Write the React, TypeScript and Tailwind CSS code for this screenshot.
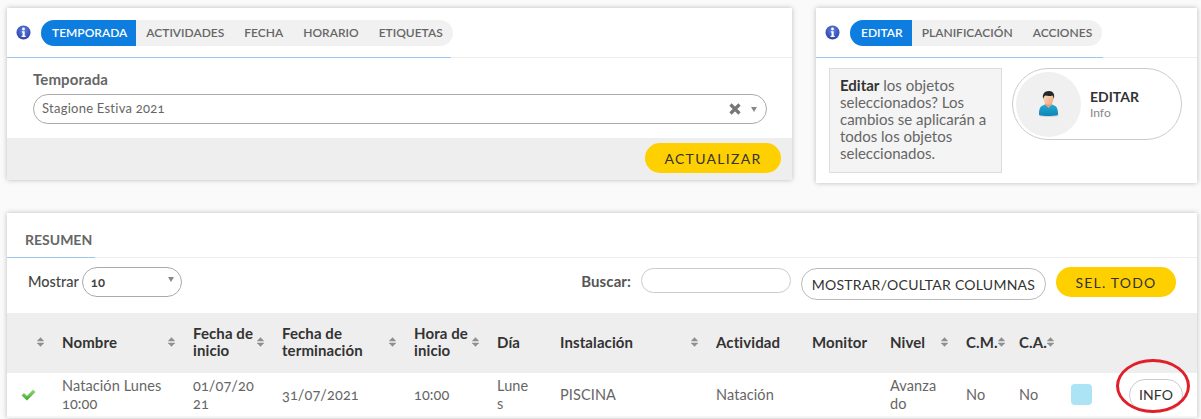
import React from "react";

function InfoIcon() {
  return (
    <svg width="15" height="15" viewBox="0 0 15 15" className="shrink-0">
      <defs>
        <radialGradient id="ig" cx="50%" cy="35%" r="70%">
          <stop offset="0%" stopColor="#5f7fe0" />
          <stop offset="100%" stopColor="#2a3fa8" />
        </radialGradient>
      </defs>
      <circle cx="7.5" cy="7.5" r="7" fill="url(#ig)" />
      <circle cx="7.5" cy="4" r="1.4" fill="#fff" />
      <path d="M5.8 6.2h2.9v4.6h1v1.2H5.6v-1.2h1V7.4h-.8z" fill="#fff" />
    </svg>
  );
}

function Sort() {
  return (
    <svg width="7" height="10" viewBox="0 0 7 10" className="shrink-0">
      <path d="M3.500 0.300L6.800 3.800Q7 4.300 6.400 4.300H0.600Q0 4.300 0.200 3.800z" fill="#8f8f8f" />
      <path d="M3.500 9.700L0.200 6.200Q0 5.700 0.600 5.700H6.400Q7 5.700 6.800 6.200z" fill="#8f8f8f" />
    </svg>
  );
}

function Caret({ className = "" }: { className?: string }) {
  return (
    <svg width="6" height="6" viewBox="0 0 6 6" className={className}>
      <path d="M0 1h6L3 6z" fill="#888" />
    </svg>
  );
}

function Person() {
  return (
    <svg width="21" height="26" viewBox="0 0 21 26">
      <defs>
        <linearGradient id="skin" x1="0" y1="0" x2="1" y2="1">
          <stop offset="0%" stopColor="#fde0c8" />
          <stop offset="100%" stopColor="#eda67c" />
        </linearGradient>
        <linearGradient id="shirt" x1="0" y1="0" x2="0" y2="1">
          <stop offset="0%" stopColor="#22a9d4" />
          <stop offset="100%" stopColor="#0f86b4" />
        </linearGradient>
      </defs>
      <ellipse cx="11" cy="24.800" rx="10" ry="1.100" fill="#d2d2d2" />
      <path d="M1 24c-.3-4.500.7-8 3-9.300L7 13.500l3.500 3 3.500-3 3 1.200c2.300 1.300 3.300 4.800 3 9.300-5.500 1.300-14.500 1.300-19 0z" fill="url(#shirt)" />
      <path d="M7 11.500h7v2.300L10.500 16.800 7 13.800z" fill="#e69b72" />
      <ellipse cx="10.500" cy="7.500" rx="5" ry="6.300" fill="url(#skin)" />
      <path d="M5.300 8C3.800 3.500 6.500 0 11 0c4 0 6.200 3 4.800 8-.3-1.700-.6-3-1.400-3.600-2 .7-4.500.7-7 .1C6.200 5 5.700 6.400 5.300 8z" fill="#262626" />
    </svg>
  );
}

function Tabs({ items }: { items: string[] }) {
  return (
    <div className="flex h-[26px] items-stretch rounded-[13px] bg-[#f1f1f1] text-[12px] font-semibold text-[#666]">
      {items.map((t, i) =>
        i === 0 ? (
          <div key={t} className="flex items-center rounded-l-[13px] bg-[#0d7ee0] pl-[11px] pr-[9px] text-white">
            {t}
          </div>
        ) : (
          <div key={t} className="flex items-center px-[10px]">
            {t}
          </div>
        )
      )}
    </div>
  );
}

const headers: { label: React.ReactNode; w: number; sort?: boolean }[] = [
  { label: "", w: 43, sort: true },
  { label: "Nombre", w: 131, sort: true },
  { label: <>Fecha de<br />inicio</>, w: 89, sort: true },
  { label: <>Fecha de<br />terminación</>, w: 132, sort: true },
  { label: <>Hora de<br />inicio</>, w: 83, sort: true },
  { label: "Día", w: 63 },
  { label: "Instalación", w: 156, sort: true },
  { label: "Actividad", w: 96 },
  { label: "Monitor", w: 78 },
  { label: "Nivel", w: 76, sort: true },
  { label: "C.M.", w: 53, sort: true },
  { label: "C.A.", w: 52, sort: true },
  { label: "", w: 54 },
  { label: "", w: 84 },
];

export default function App() {
  return (
    <div className="h-[419px] w-[1201px] overflow-hidden bg-[#fafafa] font-['Lato','Liberation_Sans',sans-serif] text-[14px] text-[#666] oldstyle-nums">
      <div className="flex items-start gap-[24px] pl-[7px] pr-[4px] pt-[8px]">
        {/* Temporada */}
        <section className="w-[785px] bg-white shadow-[0_0_5px_rgba(0,0,0,0.25)]">
          <div className="flex h-[49px] items-center gap-[10px] pl-[9px]">
            <InfoIcon />
            <Tabs items={["TEMPORADA", "ACTIVIDADES", "FECHA", "HORARIO", "ETIQUETAS"]} />
          </div>
          <div className="flex h-px bg-[#eee]">
            <div className="h-px w-[444px] bg-[#9cc6ee]" />
          </div>
          <div className="pb-[14px] pl-[26px] pr-[25px] pt-[12px]">
            <div className="mb-[6px] text-[15px] font-bold leading-[18px] tracking-[0.1px] text-[#666]">Temporada</div>
            <div className="flex h-[30px] items-center rounded-[15px] border border-[#aaa] pl-[8px] pr-[9px] text-[13px] text-[#666]">
              <span className="flex-1 tracking-[0.25px]">Stagione Estiva 2021</span>
              <svg width="12" height="12" viewBox="0 0 12 12" className="mr-[10px]">
                <path d="M1.500 1.500l9 9M10.500 1.500l-9 9" stroke="#777" strokeWidth="3.200" />
              </svg>
              <Caret />
            </div>
          </div>
          <div className="flex h-[42px] items-start justify-end bg-[#eee] pr-[11px] pt-[5px]">
            <button className="h-[30px] w-[136px] rounded-[15px] bg-[#ffd000] text-[14px] font-normal tracking-[1.300px] text-[#333]">
              ACTUALIZAR
            </button>
          </div>
        </section>

        {/* Editar */}
        <section className="h-[175px] w-[381px] bg-white shadow-[0_0_5px_rgba(0,0,0,0.25)]">
          <div className="flex h-[49px] items-center gap-[10px] pl-[9px]">
            <InfoIcon />
            <Tabs items={["EDITAR", "PLANIFICACIÓN", "ACCIONES"]} />
          </div>
          <div className="flex h-px bg-[#eee]">
            <div className="h-px w-[287px] bg-[#9cc6ee]" />
          </div>
          <div className="flex items-start gap-[10px] pl-[13px] pt-[10px]">
            <div className="h-[105px] w-[173px] border border-[#ddd] bg-[#f4f4f4] pl-[10px] pt-[8px] text-[15px] leading-[17px] text-[#666]">
              <b className="font-bold text-[#333]">Editar</b> los objetos seleccionados? Los cambios se aplicarán a todos los objetos seleccionados.
            </div>
            <div className="flex h-[72px] w-[170px] items-center rounded-[36px] border border-[#ccc] pl-[3px]">
              <div className="flex h-[65px] w-[65px] items-center justify-center rounded-full bg-[#f0f0f0]">
                <Person />
              </div>
              <div className="ml-[9px]">
                <div className="text-[14px] font-bold leading-[17px] text-[#333]">EDITAR</div>
                <div className="text-[12px] leading-[15px] text-[#888]">Info</div>
              </div>
            </div>
          </div>
        </section>
      </div>

      {/* Resumen */}
      <section className="ml-[7px] mt-[30px] w-[1190px] bg-white shadow-[0_0_5px_rgba(0,0,0,0.25)]">
        <div className="flex h-[44px] items-end pb-[9px] pl-[18px] text-[14px] font-bold leading-[16px] text-[#666]">
          RESUMEN
        </div>
        <div className="flex h-px bg-[#eee]">
          <div className="h-px w-[88px] bg-[#9cc6ee]" />
        </div>
        <div className="flex h-[55px] items-start pl-[21px] pr-[21px] pt-[9px]">
          <span className="mt-[6px] text-[14.500px] font-medium leading-[17px] text-[#444]">Mostrar</span>
          <div className="ml-[3px] flex h-[30px] w-[100px] items-center justify-between rounded-[15px] border border-[#aaa] pl-[8px] pr-[7px]">
            <span className="mt-[2px] text-[13px] font-bold text-[#444]">10</span>
            <Caret className="mb-[6px]" />
          </div>
          <span className="ml-auto mr-[10px] mt-[6px] text-[15px] font-bold leading-[17px] tracking-[0.1px] text-[#555]">Buscar:</span>
          <div className="mr-[10px] mt-[1px] h-[25px] w-[150px] rounded-[12.500px] border border-[#ccc]" />
          <button className="mr-[10px] mt-[1px] h-[32px] w-[245px] rounded-[16px] border border-[#bbb] text-[14px] font-normal tracking-[0.25px] text-[#333]">
            MOSTRAR/OCULTAR COLUMNAS
          </button>
          <button className="h-[30px] w-[120px] rounded-[15px] bg-[#ffd000] text-[14px] font-normal tracking-[1.200px] text-[#333]">
            SEL. TODO
          </button>
        </div>
        <table className="w-[1190px] table-fixed border-collapse">
          <colgroup>
            {headers.map((h, i) => (
              <col key={i} style={{ width: h.w }} />
            ))}
          </colgroup>
          <thead>
            <tr className="h-[60px] bg-[#eee]">
              {headers.map((h, i) => (
                <th key={i} className="pb-[2px] pl-[12px] pr-[6px] text-left text-[15px] font-bold leading-[17px] tracking-[0.1px] text-[#333]">
                  <div className="flex items-center justify-between">
                    <span>{h.label}</span>
                    {h.sort && <Sort />}
                  </div>
                </th>
              ))}
            </tr>
          </thead>
          <tbody>
            <tr className="h-[44px] border-b-2 border-[#f5f5f5] text-[14.500px] leading-[18px] tracking-[0.1px] text-[#666]">
              <td className="pl-[14px]">
                <svg width="15" height="12" viewBox="0 0 15 12">
                  <defs>
                    <linearGradient id="chk" x1="0" y1="0" x2="0" y2="1">
                      <stop offset="0%" stopColor="#9bd97e" />
                      <stop offset="100%" stopColor="#3fa52a" />
                    </linearGradient>
                  </defs>
                  <path d="M0.500 6.500L3 4l3 3 6-6.500 2.500 2.500L6 11.500z" fill="url(#chk)" />
                </svg>
              </td>
              <td className="pl-[12px]">Natación Lunes<br />10:00</td>
              <td className="pl-[12px]">01/07/20<br />21</td>
              <td className="pl-[12px]">31/07/2021</td>
              <td className="pl-[12px]">10:00</td>
              <td className="pl-[12px]">Lune<br />s</td>
              <td className="pl-[12px]">PISCINA</td>
              <td className="pl-[12px]">Natación</td>
              <td className="pl-[12px]"></td>
              <td className="pl-[12px]">Avanza<br />do</td>
              <td className="pl-[12px]">No</td>
              <td className="pl-[12px]">No</td>
              <td className="pl-[12px]">
                <div className="h-[21px] w-[21px] rounded-[4px] bg-[#ace3f5]" />
              </td>
              <td className="relative pl-[16px]">
                <button className="h-[32px] w-[54px] rounded-[16px] border border-[#ccc] text-[14px] font-normal text-[#333]">
                  INFO
                </button>
                <div className="absolute left-[3px] top-[-14px] h-[54px] w-[74px] rounded-[50%] border-[3px] border-[#e01f2b]" />
              </td>
            </tr>
          </tbody>
        </table>
      </section>
    </div>
  );
}
